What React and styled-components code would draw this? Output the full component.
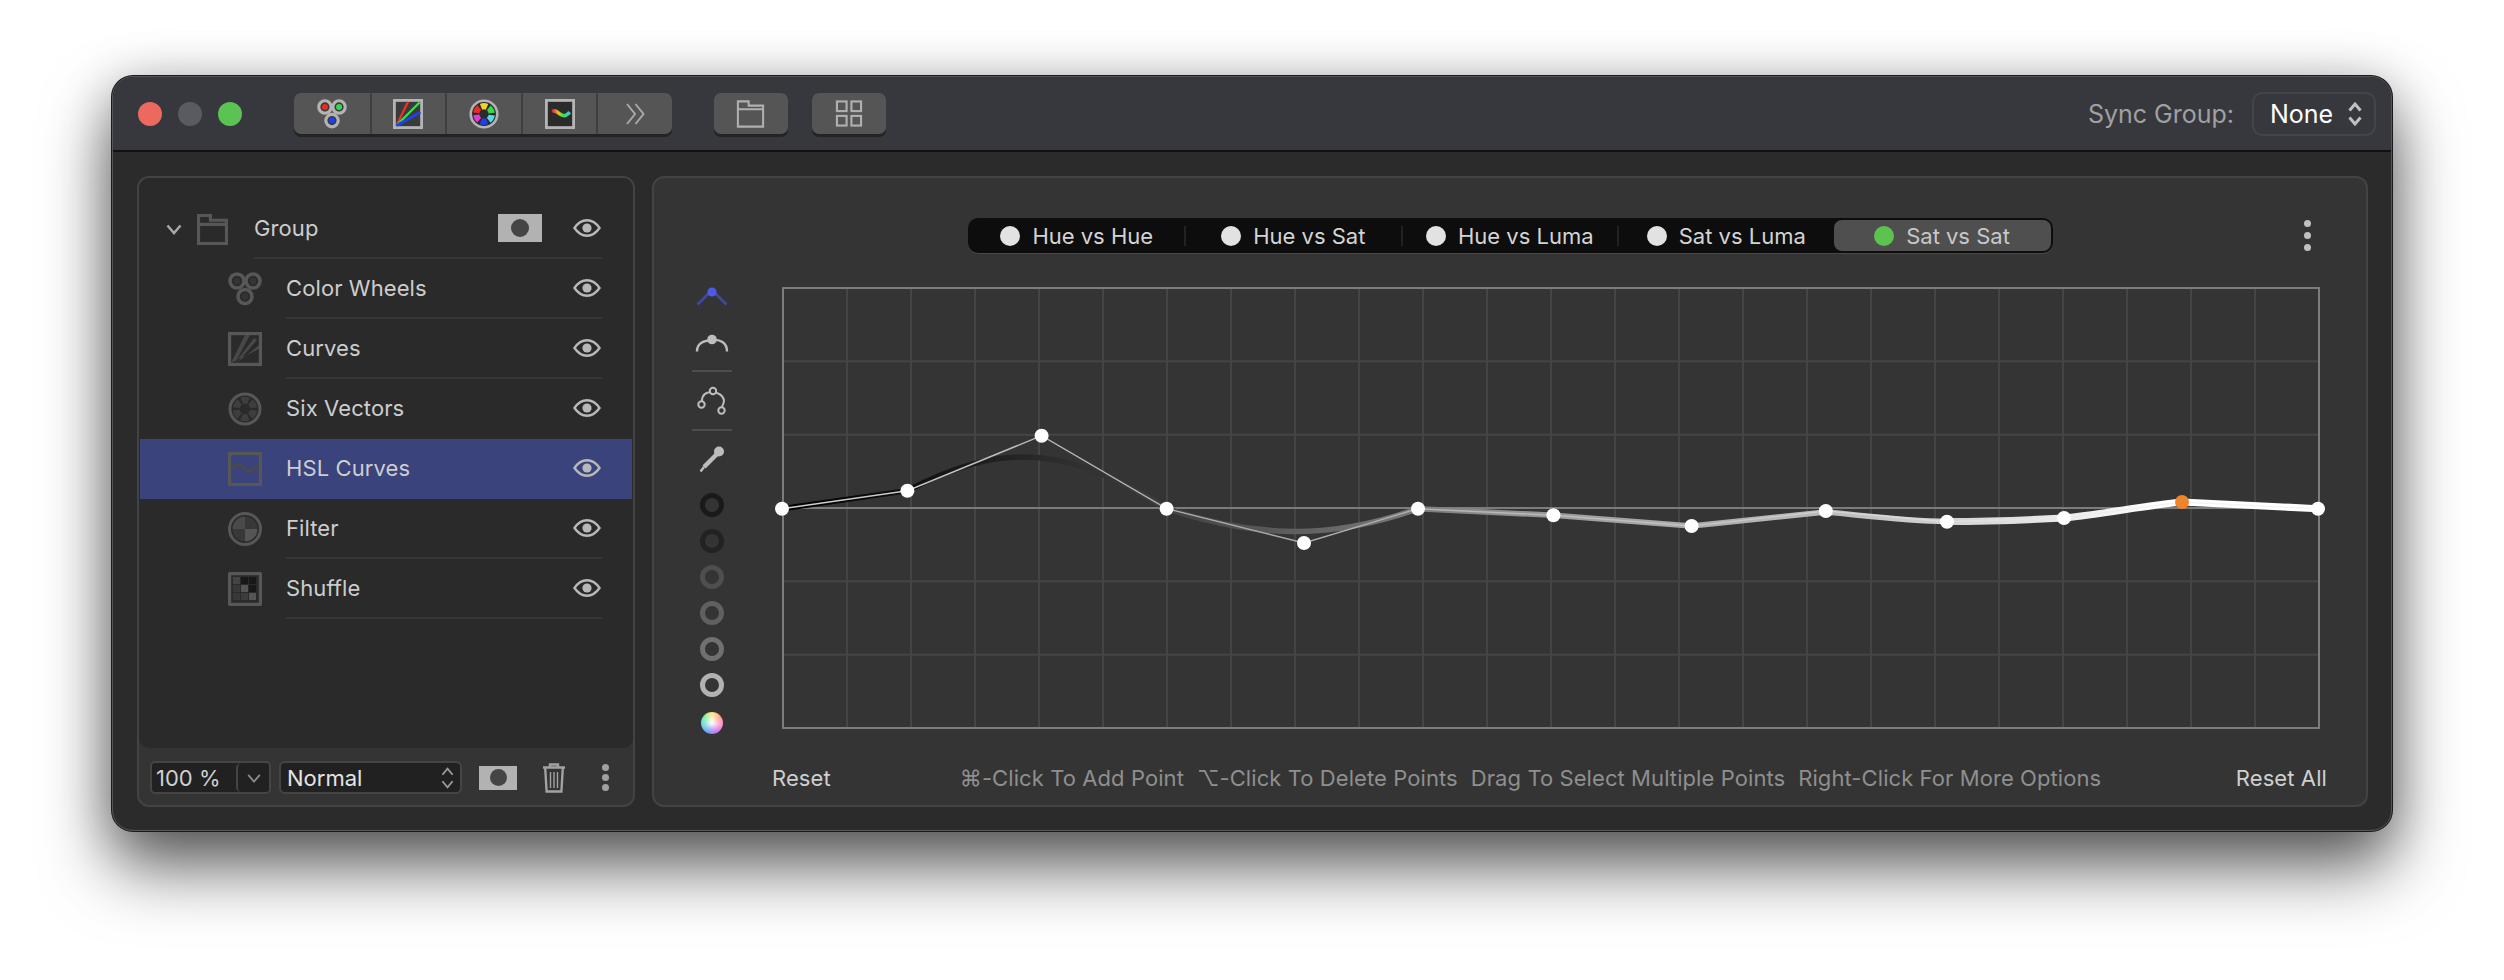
import React from "react";
import styled, { createGlobalStyle } from "styled-components";

const Global = createGlobalStyle`
  html, body { margin: 0; padding: 0; background: #fff; }
  body { font-family: Inter, "Liberation Sans", sans-serif; -webkit-font-smoothing: antialiased; }
`;

const Page = styled.div`
  width: 2504px; height: 980px; overflow: hidden; background: #fff;
  padding: 76px 0 0 112px; box-sizing: border-box;
`;
const Win = styled.div`
  width: 2280px; height: 755px; box-sizing: border-box; display: flex; flex-direction: column;
  border-radius: 21px; background: #2b2b2b; overflow: hidden;
  border: 1px solid #555659;
  box-shadow: 0 0 0 1px #1a1a1a, 0 36px 68px rgba(0,0,0,.62), 0 4px 50px rgba(0,0,0,.22);
`;
const TitleBar = styled.div`
  height: 75px; flex: none; box-sizing: border-box; display: flex; align-items: center;
  background: #37383d; border-bottom: 2px solid #111; padding: 0 15px 0 25px;
`;
const Light = styled.span`
  width: 24px; height: 24px; border-radius: 50%; background: ${p => p.$c}; margin-right: 16px; flex: none;
`;
const Seg = styled.div`
  display: flex; height: 41px; margin-left: ${p => p.$ml}px; border-radius: 7px; background: #555;
  box-shadow: 0 3px 0 #232326; overflow: hidden;
`;
const SegBtn = styled.div`
  width: ${p => p.$w || 75.6}px; display: flex; align-items: center; justify-content: center; box-sizing: border-box;
  & + & { border-left: 2px solid #3f3f41; }
`;
const Spacer = styled.div`flex: 1;`;
const SyncLabel = styled.span`font-size: 25px; color: #a0a0a2; margin-right: 18px;`;
const SyncSelect = styled.div`
  width: 124px; height: 44px; box-sizing: border-box; border: 2px solid #44454a; border-radius: 10px;
  display: flex; align-items: center; justify-content: space-between; padding: 0 12px 0 16px;
  font-size: 25px; color: #fff;
`;
const Body = styled.div`
  flex: 1; display: flex; gap: 17px; padding: 24px 23px 23px 24px; min-height: 0;
`;
const LeftPanel = styled.div`
  width: 498px; flex: none; box-sizing: border-box; display: flex; flex-direction: column;
  background: #343434; border: 2px solid #434343; border-radius: 12px; overflow: hidden;
`;
const List = styled.div`
  flex: 1; background: #2a2a2a; padding-top: 21px; border-radius: 0 0 10px 10px;
`;
const Row = styled.div`
  height: 60px; box-sizing: border-box; display: flex; align-items: center; margin: 0 1px;
  padding-left: ${p => p.$pl}px; background: ${p => p.$sel ? "#3a437b" : "transparent"};
`;
const Lead = styled.div`
  display: flex; align-items: center; gap: ${p => p.$gap || 0}px; margin-right: ${p => p.$mr || 24}px; flex: none;
`;
const RowBody = styled.div`
  flex: 1; height: 60px; box-sizing: border-box; display: flex; align-items: center; margin-right: 30px;
  border-bottom: 2px solid ${p => p.$rule ? "#363636" : "transparent"};
`;
const RowLabel = styled.span`font-size: 22px; color: #cdcdcd; flex: 1; letter-spacing: .1px;`;
const EyeBox = styled.div`display: flex; margin-right: 1px; flex: none;`;
const MaskBadge = styled.div`
  width: ${p => p.$w}px; height: ${p => p.$h}px; background: #b2b2b2; display: flex; align-items: center; justify-content: center; flex: none;
  margin-right: ${p => p.$mr || 0}px; margin-left: ${p => p.$ml || 0}px;
  &::after { content: ""; width: ${p => p.$d}px; height: ${p => p.$d}px; border-radius: 50%; background: #454545; }
`;
const Footer = styled.div`
  height: 57px; flex: none; display: flex; align-items: center; padding: 2px 0 0 11px; box-sizing: border-box;
`;
const Combo = styled.div`
  display: flex; height: 33px; width: 121px; box-sizing: border-box; border: 2px solid #454545; border-radius: 5px;
  background: #212121; font-size: 22px; color: #d0d0d0;
`;
const ComboText = styled.div`flex: 1; display: flex; align-items: center; padding-left: 4px;`;
const ComboBtn = styled.div`
  width: 31px; display: flex; align-items: center; justify-content: center; border-left: 2px solid #454545;
  border-radius: 5px;
`;
const Select = styled.div`
  display: flex; width: 183px; height: 33px; box-sizing: border-box; border: 2px solid #454545; border-radius: 6px; margin-left: 8px;
  background: #212121; font-size: 22px; color: #e4e4e4; align-items: center; justify-content: space-between; padding: 0 6px 0 6px;
`;
const TrashWrap = styled.div`margin-left: 25px; display: flex;`;
const DotsV = styled.div`
  display: flex; flex-direction: column; gap: ${p => p.$gap}px; margin-left: ${p => p.$ml || 0}px; margin-right: ${p => p.$mr || 0}px; flex: none;
  justify-self: end;
  & > i { display: block; width: ${p => p.$d}px; height: ${p => p.$d}px; border-radius: 50%; background: ${p => p.$c}; }
`;
const RightPanel = styled.div`
  flex: 1; min-width: 0; box-sizing: border-box; display: flex; flex-direction: column;
  background: #343434; border: 2px solid #434343; border-radius: 12px;
`;
const TopRow = styled.div`
  display: grid; grid-template-columns: 1fr auto 1fr; align-items: center; padding: 40px 0 0 0;
`;
const Tabs = styled.div`
  grid-column: 2; width: 1085px; height: 35px; box-sizing: border-box; padding: 2px; display: flex; align-items: center;
  background: #0d0d0d; border-radius: 10px; box-shadow: 0 1px 0 #484848;
`;
const Tab = styled.div`
  flex: ${p => p.$on ? "1 1 auto" : "0 0 214.5px"}; height: 31px; display: flex; align-items: center; justify-content: center; gap: 12px;
  font-size: 22px; color: ${p => p.$on ? "#c8c8c8" : "#d4d4d4"};
  background: ${p => p.$on ? "#4f4f4f" : "transparent"}; border-radius: 8px;
`;
const TabDot = styled.span`width: 20px; height: 20px; border-radius: 50%; background: ${p => p.$c}; flex: none;`;
const TabSep = styled.span`width: 2px; height: 20px; background: #222; flex: none;`;
const GraphRow = styled.div`
  display: flex; align-items: flex-start; margin-top: 35px; padding-left: 28px;
`;
const Tools = styled.div`
  width: 60px; flex: none; margin-right: 41px; margin-top: -6px; display: flex; flex-direction: column; align-items: center;
`;
const Slot = styled.div`
  height: ${p => p.$h || 30}px; margin-top: ${p => p.$mt || 0}px; display: flex; align-items: center; justify-content: center;
`;
const ToolSep = styled.div`width: 40px; height: 2px; background: #4d4d4d; margin-top: ${p => p.$mt}px;`;
const Ring = styled.div`
  width: 24px; height: 24px; box-sizing: border-box; border: 5px solid ${p => p.$c}; border-radius: 50%; margin-top: ${p => p.$mt}px;
`;
const Rainbow = styled.div`
  width: 22px; height: 22px; border-radius: 50%; margin-top: 15px;
  background: radial-gradient(circle, #fff 0, rgba(255,255,255,.35) 45%, rgba(255,255,255,0) 75%),
    conic-gradient(#ffe27a, #ff9a80, #ff80c0, #c060f0, #6090f0, #50d0e0, #70ef90, #ffe27a);
`;
const Graph = styled.svg`display: block; flex: none; overflow: visible;`;
const BottomRow = styled.div`
  display: flex; align-items: center; margin-top: 31px; padding: 0 39px 0 118px; font-size: 22px;
`;
const ResetText = styled.span`color: #cfcfcf; letter-spacing: .1px;`;
const Hints = styled.div`display: flex; gap: 13px; margin-left: 129px; color: #8f8f8f; letter-spacing: .08px;`;
const PushRight = styled.span`margin-left: auto;`;

const Eye = () => (
  <svg width="28" height="18" viewBox="0 0 28 18" fill="none">
    <path d="M1.5 9C6 2.4 10 1.3 14 1.3S22 2.4 26.5 9C22 15.6 18 16.7 14 16.7S6 15.6 1.5 9Z" stroke="#b8b8b8" strokeWidth="2.4" />
    <circle cx="14" cy="9" r="4.6" fill="#b8b8b8" />
  </svg>
);
const Chevron = ({ size = 18, c = "#a8a8a8", w = 2.5 }) => (
  <svg width={size} height={size} viewBox="0 0 18 18" fill="none">
    <path d="M2.5 5.5L9 13L15.5 5.5" stroke={c} strokeWidth={w} />
  </svg>
);
const UpDown = ({ w = 14, h = 28, c = "#aaa", sw = 2.4 }) => (
  <svg width={w} height={h} viewBox="0 0 14 28" fill="none">
    <path d="M1.5 10.5L7 4L12.5 10.5M1.5 17.5L7 24L12.5 17.5" stroke={c} strokeWidth={sw} />
  </svg>
);
const Folder = ({ w, h, c, sw }) => (
  <svg width={w} height={h} viewBox="0 0 30 30" fill="none">
    <path d="M1.5 28.5V1.5H13V6H28.5V28.5ZM1.5 10H28.5" stroke={c} strokeWidth={sw} />
  </svg>
);
const RingsIcon = ({ c, dots, fill = "none", size = 34 }) => (
  <svg width={size} height={size} viewBox="0 0 34 34" fill={fill}>
    <g stroke={c} strokeWidth="3.6">
      <circle cx="9" cy="9" r="7" /><circle cx="25" cy="9" r="7" /><circle cx="17" cy="24.5" r="7" />
    </g>
    <circle cx="9" cy="9" r="3.4" fill={dots ? "#f02a20" : "#343434"} />
    <circle cx="25" cy="9" r="3.4" fill={dots ? "#35d84a" : "#343434"} />
    <circle cx="17" cy="24.5" r="3.4" fill={dots ? "#1f40f0" : "#343434"} />
  </svg>
);
const CurvesIcon = ({ c, color, size = 34 }) => (
  <svg width={size} height={size} viewBox="0 0 34 34" fill="none">
    <rect x="1.5" y="1.5" width="31" height="31" fill={color ? "#3a3a3a" : "none"} stroke={c} strokeWidth="3.4" />
    {color ? (
      <>
        <path d="M4 30L17 3" stroke="#f03028" strokeWidth="2.6" />
        <path d="M4 30L30 4" stroke="#3be24a" strokeWidth="2.6" />
        <path d="M4 30L31 15" stroke="#2040f0" strokeWidth="3" />
      </>
    ) : (
      <path d="M3 31L17 3L22 3L7 31L26 6L29 8L9 31L31 13V17Z" fill="#484848" />
    )}
  </svg>
);
const WheelIcon = ({ c, cols, bg = "none", size = 34 }) => (
  <svg width={size} height={size} viewBox="0 0 34 34" fill="none">
    <circle cx="17" cy="17" r="15" fill={bg} stroke={c} strokeWidth="3" />
    {cols.map((k, i) => (
      <circle key={i} cx="17" cy="17" r="8.8" stroke={k} strokeWidth="7" pathLength="60" strokeDasharray="7.5 52.5"
        transform={`rotate(${-90 - 22 + i * 60} 17 17)`} />
    ))}
  </svg>
);
const WaveIcon = ({ c, color, size = 34 }) => (
  <svg width={size} height={size} viewBox="0 0 34 34" fill="none">
    <defs>
      <linearGradient id="rbw" x1="0" x2="1" y1="0" y2="0">
        <stop offset="0" stopColor="#e02040" /><stop offset=".35" stopColor="#e8c020" />
        <stop offset=".6" stopColor="#40e040" /><stop offset="1" stopColor="#30c8e0" />
      </linearGradient>
    </defs>
    <rect x="1.5" y="1.5" width="31" height="31" fill={color ? "#2b2b2b" : "none"} stroke={c} strokeWidth="3.4" />
    {color
      ? <path d="M8 14C12 12 14 15 17 17S23 21 28 15" stroke="url(#rbw)" strokeWidth="4" />
      : <path d="M4 16C9 10 13 13 17 17S25 19 30 13" stroke="#4a4a4a" strokeWidth="3" />}
  </svg>
);
const FilterIcon = ({ c }) => (
  <svg width="34" height="34" viewBox="0 0 34 34" fill="none">
    <circle cx="17" cy="17" r="15.5" stroke={c} strokeWidth="3" />
    <path d="M17 17V4.5A12.5 12.5 0 0 0 4.5 17Z" fill="#4a4a4a" />
    <path d="M17 17V4.5A12.5 12.5 0 0 1 29.5 17Z" fill="#383838" />
    <path d="M17 17V29.5A12.5 12.5 0 0 1 4.5 17Z" fill="#383838" />
    <path d="M17 17V29.5A12.5 12.5 0 0 0 29.5 17Z" fill="#555" />
  </svg>
);
const shuffleCells = ["#444", "#181818", "#181818", "#383838", "#555", "#181818", "#383838", "#3c3c3c", "#555"];
const ShuffleIcon = ({ c }) => (
  <svg width="34" height="34" viewBox="0 0 34 34" fill="none">
    <rect x="1.5" y="1.5" width="31" height="31" rx="1" stroke={c} strokeWidth="3.4" />
    {shuffleCells.map((k, i) => (
      <rect key={i} x={5 + (i % 3) * 8} y={5 + Math.floor(i / 3) * 8} width="7" height="7" fill={k} />
    ))}
  </svg>
);
const Trash = () => (
  <svg width="24" height="30" viewBox="0 0 24 30" fill="none" stroke="#a2a2a2">
    <path d="M8 4V1.5H16V4M1 4.5H23" strokeWidth="2.4" />
    <path d="M3.2 5L4.6 28.5H19.4L20.8 5" strokeWidth="2.4" />
    <path d="M8.5 9V25M12 9V25M15.5 9V25" strokeWidth="1.4" />
  </svg>
);
const Double = () => (
  <svg width="21" height="22" viewBox="0 0 21 22" fill="none" stroke="#a8a8a8" strokeWidth="2">
    <path d="M2 1L10 11L2 21M10.5 1L18.5 11L10.5 21" />
  </svg>
);
const GridIcon = () => (
  <svg width="28" height="27" viewBox="0 0 28 28" fill="none" stroke="#b0b0b0" strokeWidth="2.2">
    <rect x="1.5" y="1.5" width="10" height="10" /><rect x="16.5" y="1.5" width="10" height="10" />
    <rect x="1.5" y="16.5" width="10" height="10" /><rect x="16.5" y="16.5" width="10" height="10" />
  </svg>
);
const NodeSharp = () => (
  <svg width="32" height="30" viewBox="0 0 32 30" fill="none">
    <path d="M1.5 22.5L16 8L30.5 22.5" stroke="#4248a8" strokeWidth="2.6" />
    <circle cx="16" cy="10" r="4.6" fill="#5058e8" />
  </svg>
);
const NodeSmooth = () => (
  <svg width="34" height="30" viewBox="0 0 34 30" fill="none">
    <path d="M2 23.5C2 15 8 13 17 12S32 15 32 23.5" stroke="#bdbdbd" strokeWidth="2.4" />
    <circle cx="17" cy="11.5" r="4.8" fill="#bdbdbd" />
  </svg>
);
const NodeBezier = () => (
  <svg width="30" height="30" viewBox="0 0 30 30" fill="none" stroke="#bdbdbd" strokeWidth="2">
    <path d="M5 15C5 8 10 6 15 6S26 9 27 14C27 18 25 20 25 21" />
    <circle cx="4.5" cy="18.5" r="3.2" fill="#343434" />
    <circle cx="16" cy="5" r="3.2" fill="#343434" />
    <circle cx="24.5" cy="24.5" r="3.2" fill="#343434" />
  </svg>
);
const Dropper = () => (
  <svg width="26" height="28" viewBox="0 0 26 28" fill="none">
    <path d="M18 9L5 22" stroke="#bdbdbd" strokeWidth="4.4" />
    <path d="M5 22L1.5 26.5" stroke="#bdbdbd" strokeWidth="2.4" />
    <circle cx="20" cy="6.5" r="5" fill="#bdbdbd" />
  </svg>
);

const pts = [
  [782, 507.7], [907.4, 489.7], [1041.6, 434.7], [1166.6, 507.7], [1304, 542], [1418, 507.7], [1553.4, 514.3],
  [1691.6, 525], [1825.8, 510], [1947, 520.7], [2064, 517], [2182, 501], [2318, 507.7],
];
const ox = 783, oy = 287;
const rel = ([x, y]) => [x - ox, y - oy];
const polyline = pts.map(p => rel(p).join(",")).join(" ");
const curve = `M-1 220.7 L124.4 202.7 C175 176 210 169 242 169 C276 169 320 180 383.6 220.7
 C430 236 470 243.5 513 243.5 C555 243.5 595 235 635 220.7 L770.4 227.3 L908.6 238 L1042.8 224
 C1085 228 1125 233 1164 233.5 C1200 233.5 1245 232 1281 230`;
const curveEnd = `M1164 233.5 C1200 233.5 1245 232 1281 230 C1320 226 1360 218 1399 214 L1535 220.7`;
const W = 1536, H = 440;
const vLines = Array.from({ length: 23 }, (_, i) => (i + 1) * 64);
const hLines = [1, 2, 4, 5].map(i => (i * H) / 6);

const rows = [
  { name: "Color Wheels", icon: <RingsIcon c="#575757" />, rule: true },
  { name: "Curves", icon: <CurvesIcon c="#575757" />, rule: true },
  { name: "Six Vectors", icon: <WheelIcon c="#575757" cols={Array(6).fill("#3e3e3e")} /> },
  { name: "HSL Curves", icon: <WaveIcon c="#575757" />, sel: true },
  { name: "Filter", icon: <FilterIcon c="#575757" />, rule: true },
  { name: "Shuffle", icon: <ShuffleIcon c="#575757" />, rule: true },
];
const tabs = ["Hue vs Hue", "Hue vs Sat", "Hue vs Luma", "Sat vs Luma", "Sat vs Sat"];
const hints = ["⌘-Click To Add Point", "⌥-Click To Delete Points", "Drag To Select Multiple Points", "Right-Click For More Options"];
const rings = ["#1a1a1a", "#222", "#4e4e4e", "#606060", "#707070", "#b2b2b2"];

export default function App() {
  return (
    <Page>
      <Global />
      <Win>
        <TitleBar>
          <Light $c="#ec695f" /><Light $c="#5a5b60" /><Light $c="#5ac351" />
          <Seg $ml={36}>
            <SegBtn><RingsIcon size={30} c="#b4b4b4" dots fill="#3a3a3a" /></SegBtn>
            <SegBtn><CurvesIcon size={30} c="#b4b4b4" color /></SegBtn>
            <SegBtn><WheelIcon size={30} c="#b4b4b4" bg="#2b2b2b" cols={["#f2d030", "#38d848", "#50dce8", "#2040f0", "#e838d8", "#f02a28"]} /></SegBtn>
            <SegBtn><WaveIcon size={30} c="#b4b4b4" color /></SegBtn>
            <SegBtn><Double /></SegBtn>
          </Seg>
          <Seg $ml={42}><SegBtn $w={74}><Folder w={29} h={28} c="#b0b0b0" sw={2.2} /></SegBtn></Seg>
          <Seg $ml={24}><SegBtn $w={74}><GridIcon /></SegBtn></Seg>
          <Spacer />
          <SyncLabel>Sync Group:</SyncLabel>
          <SyncSelect>None<UpDown c="#c0c0c0" sw={3} /></SyncSelect>
        </TitleBar>
        <Body>
          <LeftPanel>
            <List>
              <Row $pl={25}>
                <Lead $gap={13} $mr={25}>
                  <Chevron />
                  <Folder w={33} h={31} c="#575757" sw={3} />
                </Lead>
                <RowBody $rule>
                  <RowLabel>Group</RowLabel>
                  <MaskBadge $w={44} $h={28} $d={18} $mr={31} />
                  <EyeBox><Eye /></EyeBox>
                </RowBody>
              </Row>
              {rows.map(r => (
                <Row key={r.name} $pl={88} $sel={r.sel}>
                  <Lead>{r.icon}</Lead>
                  <RowBody $rule={r.rule}>
                    <RowLabel>{r.name}</RowLabel>
                    <EyeBox><Eye /></EyeBox>
                  </RowBody>
                </Row>
              ))}
            </List>
            <Footer>
              <Combo>
                <ComboText>100 %</ComboText>
                <ComboBtn><Chevron size={16} c="#8c8c8c" w={2} /></ComboBtn>
              </Combo>
              <Select>Normal<UpDown w={13} h={28} c="#9a9a9a" sw={2} /></Select>
              <MaskBadge $w={38} $h={24} $d={17} $ml={17} />
              <TrashWrap><Trash /></TrashWrap>
              <DotsV $gap={3} $d={7} $c="#a0a0a0" $ml={36}><i /><i /><i /></DotsV>
            </Footer>
          </LeftPanel>
          <RightPanel>
            <TopRow>
              <Tabs>
                {tabs.map((t, i) => (
                  <React.Fragment key={t}>
                    <Tab $on={i === 4}><TabDot $c={i === 4 ? "#5cc350" : "#e2e2e2"} />{t}</Tab>
                    {i < 3 && <TabSep />}
                  </React.Fragment>
                ))}
              </Tabs>
              <DotsV $gap={5} $d={7} $c="#c0c0c0" $mr={55}><i /><i /><i /></DotsV>
            </TopRow>
            <GraphRow>
              <Tools>
                <Slot><NodeSharp /></Slot>
                <Slot $mt={16}><NodeSmooth /></Slot>
                <ToolSep $mt={12} />
                <Slot $mt={14}><NodeBezier /></Slot>
                <ToolSep $mt={13} />
                <Slot $mt={13}><Dropper /></Slot>
                {rings.map((c, i) => <Ring key={c} $c={c} $mt={i === 0 ? 19 : 12} />)}
                <Rainbow />
              </Tools>
              <Graph width={W} height={H} viewBox={`0 0 ${W} ${H}`}>
                <defs>
                  <linearGradient id="thick" gradientUnits="userSpaceOnUse" x1="0" x2={W} y1="0" y2="0">
                    <stop offset="0" stopColor="#000" />
                    <stop offset=".09" stopColor="#111" />
                    <stop offset=".17" stopColor="#2a2a2a" />
                    <stop offset=".24" stopColor="#3c3c3c" />
                    <stop offset=".33" stopColor="#5e5e5e" />
                    <stop offset=".5" stopColor="#9a9a9a" />
                    <stop offset=".7" stopColor="#c0c0c0" />
                    <stop offset=".9" stopColor="#fff" />
                    <stop offset="1" stopColor="#fff" />
                  </linearGradient>
                  <linearGradient id="thin" gradientUnits="userSpaceOnUse" x1="0" x2={W} y1="0" y2="0">
                    <stop offset="0" stopColor="#d0d0d0" />
                    <stop offset=".3" stopColor="#a8a8a8" />
                    <stop offset=".6" stopColor="#c4c4c4" />
                    <stop offset=".9" stopColor="#f4f4f4" />
                  </linearGradient>
                </defs>
                {vLines.map(x => <line key={x} x1={x} x2={x} y1="0" y2={H} stroke="#454545" strokeWidth="2" />)}
                {hLines.map(y => <line key={y} x1="0" x2={W} y1={y} y2={y} stroke="#454545" strokeWidth="2" />)}
                <line x1="0" x2={W} y1={H / 2} y2={H / 2} stroke="#7c7c7c" strokeWidth="2" />
                <rect x="0" y="0" width={W} height={H} fill="none" stroke="#7c7c7c" strokeWidth="2" />
                <path d={curve} fill="none" stroke="url(#thick)" strokeWidth="5.5" />
                <path d={curveEnd} fill="none" stroke="url(#thick)" strokeWidth="7" />
                <polyline points={polyline} fill="none" stroke="url(#thin)" strokeWidth="1.4" />
                {pts.map((p, i) => {
                  const [x, y] = rel(p);
                  return <circle key={i} cx={x} cy={y} r="7" fill={i === 11 ? "#ef852b" : "#fff"} />;
                })}
              </Graph>
            </GraphRow>
            <BottomRow>
              <ResetText>Reset</ResetText>
              <Hints>{hints.map(h => <span key={h}>{h}</span>)}</Hints>
              <PushRight><ResetText>Reset All</ResetText></PushRight>
            </BottomRow>
          </RightPanel>
        </Body>
      </Win>
    </Page>
  );
}
